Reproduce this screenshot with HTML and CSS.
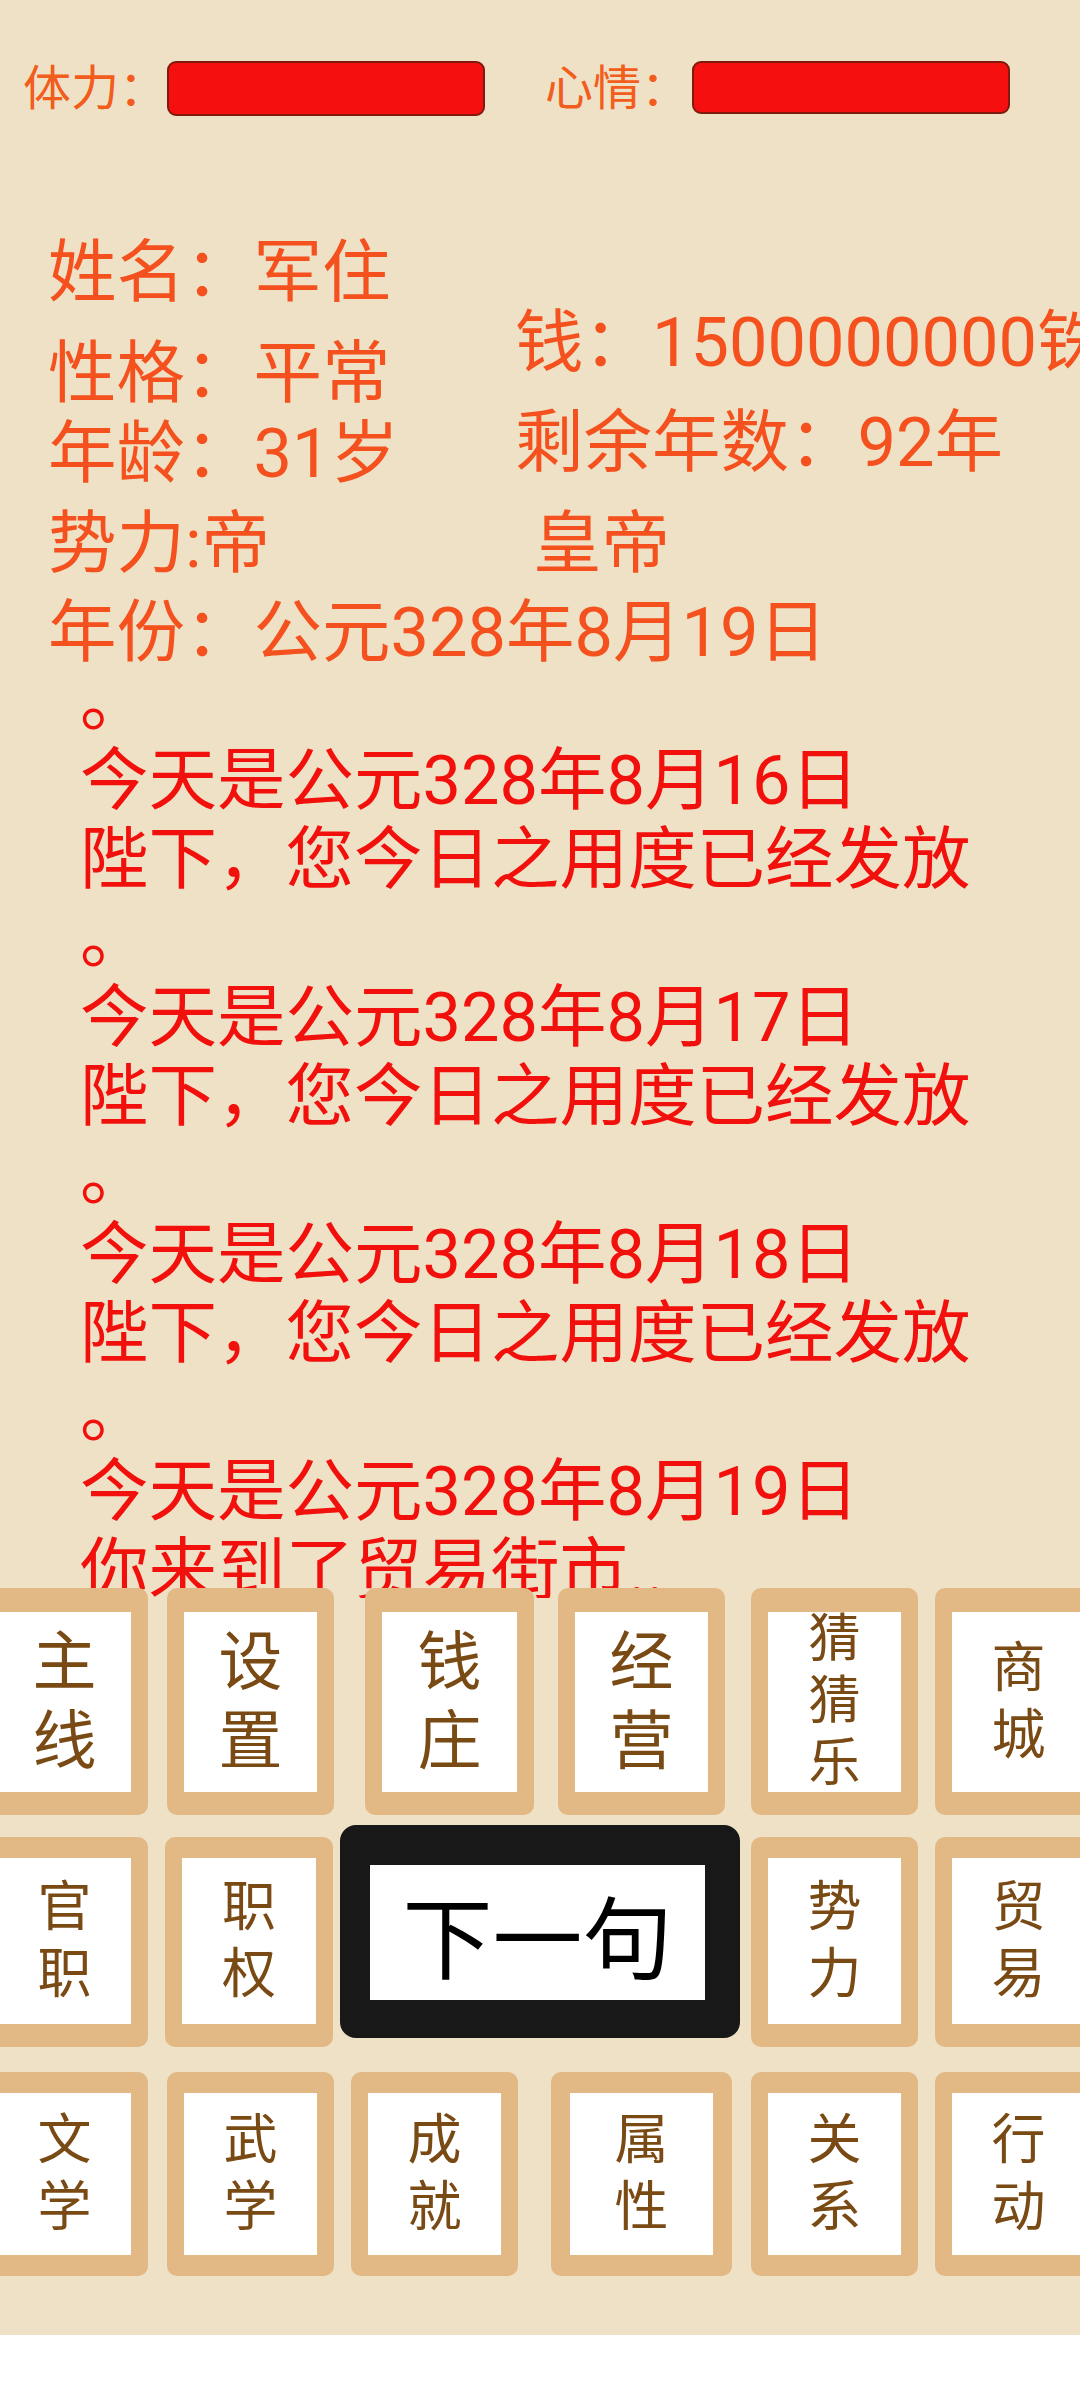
FILE: index.html
```html
<!DOCTYPE html>
<html lang="zh-CN">
<head>
  <meta charset="UTF-8">
  <meta name="viewport" content="width=device-width, initial-scale=1.0">
  <title>皇帝</title>
  <link rel="stylesheet" href="styles.css">
</head>
<body>

<div class="screen">
  <div class="stats">
    <span class="stat-label">体力：</span>
    <div class="stat-bar"></div>
    <span class="stat-label stat-second">心情：</span>
    <div class="stat-bar stat-bar-2"></div>
  </div>

  <div class="info">
    <div class="info-cols">
      <div class="col-left">
        <div class="line">姓名：军住</div>
        <div class="line line-char">性格：平常</div>
        <div class="line line-age">年龄：31岁</div>
      </div>
      <div class="col-right">
        <div class="line">钱：1500000000铢</div>
        <div class="line line-years">剩余年数：92年</div>
      </div>
    </div>
    <div class="power-row">
      <div class="line power">势力:帝</div>
      <div class="line">皇帝</div>
    </div>
    <div class="line date">年份：公元328年8月19日</div>
  </div>

  <div class="log">
    。<br>
    今天是公元328年8月16日<br>
    陛下，您今日之用度已经发放<br>
    。<br>
    今天是公元328年8月17日<br>
    陛下，您今日之用度已经发放<br>
    。<br>
    今天是公元328年8月18日<br>
    陛下，您今日之用度已经发放<br>
    。<br>
    今天是公元328年8月19日<br>
    你来到了贸易街市..
  </div>

  <div class="panel">
    <div class="btn-row row-1">
      <button class="btn"><span class="btn-text">主线</span></button>
      <button class="btn"><span class="btn-text">设置</span></button>
      <button class="btn"><span class="btn-text">钱庄</span></button>
      <button class="btn"><span class="btn-text">经营</span></button>
      <button class="btn"><span class="btn-text tiny">猜猜乐</span></button>
      <button class="btn"><span class="btn-text small">商城</span></button>
    </div>
    <div class="btn-row row-2">
      <button class="btn"><span class="btn-text small">官职</span></button>
      <button class="btn"><span class="btn-text small">职权</span></button>
      <button class="btn-next">下一句</button>
      <button class="btn"><span class="btn-text small">势力</span></button>
      <button class="btn"><span class="btn-text small">贸易</span></button>
    </div>
    <div class="btn-row row-3">
      <button class="btn"><span class="btn-text small">文学</span></button>
      <button class="btn"><span class="btn-text small">武学</span></button>
      <button class="btn"><span class="btn-text small">成就</span></button>
      <button class="btn"><span class="btn-text small">属性</span></button>
      <button class="btn"><span class="btn-text small">关系</span></button>
      <button class="btn"><span class="btn-text small">行动</span></button>
    </div>
  </div>
</div>

</body>
</html>
```

FILE: styles.css
```css
body {
  margin: 0;
  background: #fff;
  font-family: Roboto, "Noto Sans CJK SC", sans-serif;
}
.screen {
  width: 1080px;
  height: 2335px;
  background: #efe1c6;
  overflow: hidden;
}

/* top bars */
.stats {
  display: flex;
  align-items: center;
  height: 55px;
  padding: 61px 0 0 23px;
}
.stat-label {
  font-size: 48px;
  line-height: 55px;
  color: #f25c1c;
}
.stat-second {
  margin-left: 60px;
}
.stat-bar {
  box-sizing: border-box;
  width: 318px;
  height: 55px;
  background: #f50f0f;
  border: 2px solid #7e1a0e;
  border-radius: 9px;
}
.stat-bar-2 {
  margin-left: 3px;
  height: 53px;
  margin-top: -3px;
}

/* player info */
.info {
  padding: 117px 0 0 48px;
  color: #f4511e;
}
.line {
  font-size: 68.5px;
  line-height: 79px;
  white-space: nowrap;
}
.info-cols {
  display: flex;
}
.col-left {
  flex-shrink: 0;
  width: 467px;
}
.col-right {
  padding-top: 70px;
}
.line-char {
  margin-top: 22px;
}
.line-age {
  margin-top: 1px;
}
.line-years {
  margin-top: 21px;
}
.power-row {
  display: flex;
  margin-top: 11px;
}
.power {
  flex-shrink: 0;
  width: 485px;
}
.date {
  margin-top: 20px;
  line-height: 59px;
}

/* message log */
.log {
  height: 936px;
  padding-left: 80px;
  overflow: hidden;
  font-size: 68.5px;
  line-height: 79px;
  color: #f2100c;
}

/* buttons */
.panel {
  position: relative;
  margin-top: -10px;
}
.btn-row {
  display: flex;
  margin-left: -19px;
}
.btn {
  box-sizing: border-box;
  flex-shrink: 0;
  width: 167px;
  padding: 0;
  background: #fff;
  border: solid #e2b985;
  border-radius: 10px;
  display: flex;
  align-items: center;
  justify-content: center;
  overflow: hidden;
  font-family: inherit;
  color: #7a4a14;
}
.btn-text {
  width: 1em;
  font-size: 64px;
  line-height: 79px;
  text-align: center;
}
.btn-text.small {
  font-size: 54px;
  line-height: 67px;
}
.btn-text.tiny {
  font-size: 52px;
  line-height: 62px;
}

.row-1 .btn {
  height: 227px;
  border-width: 24px 17px 23px;
}
.row-1 .btn:nth-child(2) { margin-left: 19px; }
.row-1 .btn:nth-child(3) { margin-left: 31px; width: 169px; }
.row-1 .btn:nth-child(4) { margin-left: 24px; }
.row-1 .btn:nth-child(5) { margin-left: 26px; }
.row-1 .btn:nth-child(6) { margin-left: 17px; }

.row-2 {
  margin-top: 10px;
  height: 222px;
  align-items: flex-start;
}
.row-2 .btn {
  margin-top: 12px;
  height: 210px;
  border-width: 21px 17px 23px;
}
.row-2 .btn:nth-child(2) { margin-left: 17px; width: 168px; }
.row-2 .btn:nth-child(4) { margin-left: 11px; }
.row-2 .btn:nth-child(5) { margin-left: 17px; }
.btn-next {
  box-sizing: border-box;
  flex-shrink: 0;
  margin-left: 7px;
  width: 400px;
  height: 213px;
  padding: 0;
  background: #fff;
  border: solid #181818;
  border-width: 40px 35px 38px 30px;
  border-radius: 16px;
  font-family: inherit;
  font-size: 90px;
  color: #000;
}

.row-3 {
  margin-top: 25px;
}
.row-3 .btn {
  height: 204px;
  border-width: 21px 17px;
}
.row-3 .btn:nth-child(2) { margin-left: 19px; }
.row-3 .btn:nth-child(3) { margin-left: 17px; }
.row-3 .btn:nth-child(4) { margin-left: 33px; width: 181px; border-left-width: 19px; border-right-width: 19px; }
.row-3 .btn:nth-child(5) { margin-left: 19px; }
.row-3 .btn:nth-child(6) { margin-left: 17px; }
```
